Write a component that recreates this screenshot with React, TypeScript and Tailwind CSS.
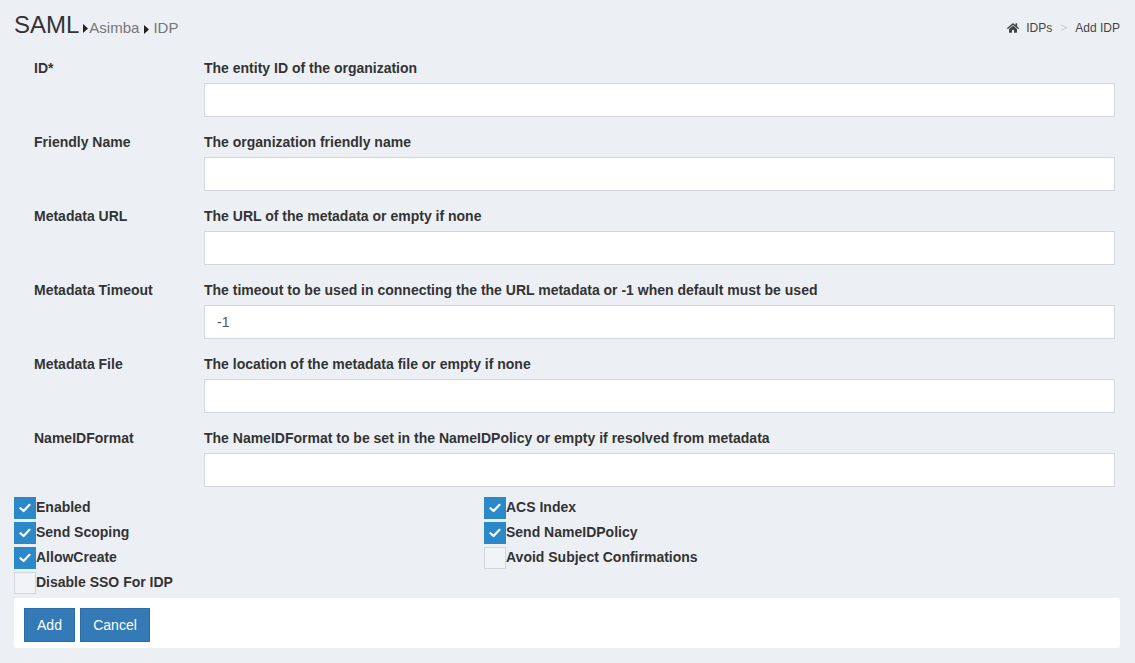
import { FaHome } from 'react-icons/fa';

interface Field {
  label: string;
  help: string;
  value?: string;
}

const fields: Field[] = [
  { label: 'ID*', help: 'The entity ID of the organization' },
  { label: 'Friendly Name', help: 'The organization friendly name' },
  { label: 'Metadata URL', help: 'The URL of the metadata or empty if none' },
  { label: 'Metadata Timeout', help: 'The timeout to be used in connecting the the URL metadata or -1 when default must be used', value: '-1' },
  { label: 'Metadata File', help: 'The location of the metadata file or empty if none' },
  { label: 'NameIDFormat', help: 'The NameIDFormat to be set in the NameIDPolicy or empty if resolved from metadata' },
];

const leftChecks = [
  { label: 'Enabled', checked: true },
  { label: 'Send Scoping', checked: true },
  { label: 'AllowCreate', checked: true },
  { label: 'Disable SSO For IDP', checked: false },
];

const rightChecks = [
  { label: 'ACS Index', checked: true },
  { label: 'Send NameIDPolicy', checked: true },
  { label: 'Avoid Subject Confirmations', checked: false },
];

function Caret() {
  return (
    <svg width="5" height="9" viewBox="0 0 5 9" className="inline-block">
      <path d="M0 0 L5 4.5 L0 9 Z" fill="#222" />
    </svg>
  );
}

function CheckRow({ label, checked }: { label: string; checked: boolean }) {
  return (
    <label className="flex h-[25px] items-start">
      {checked ? (
        <span className="flex h-[22px] w-[22px] items-center justify-center bg-[#2c89c9]">
          <svg width="12" height="10" viewBox="0 0 12 10">
            <path d="M1.5 5.2 L4.6 8 L10.5 1.8" stroke="#fff" strokeWidth="2.2" fill="none" strokeLinecap="round" strokeLinejoin="round" />
          </svg>
        </span>
      ) : (
        <span className="h-[22px] w-[22px] border border-[#d2d6de] bg-[#f1f3f6]" />
      )}
      <span className="text-[14px] font-bold leading-[20px] text-[#333]">{label}</span>
    </label>
  );
}

export default function App() {
  return (
    <div className="min-h-[663px] bg-[#ecf0f5] font-['Liberation_Sans',Arial,sans-serif] text-[#333]">
      {/* header */}
      <div className="flex items-start justify-between pl-[14px] pr-[15px] pt-[12px]">
        <h1 className="flex items-baseline text-[24px] leading-[26px] text-[#333]">
          SAML
          <span className="ml-[4px] flex items-baseline text-[15px] text-[#777]">
            <Caret />
            <span className="ml-[1px]">Asimba</span>
            <span className="ml-[5px]"><Caret /></span>
            <span className="ml-[4px]">IDP</span>
          </span>
        </h1>
        <div className="mt-[7px] flex items-center text-[12px] text-[#444]">
          <FaHome className="mr-[7px] text-[12px] text-[#444]" />
          <span>IDPs</span>
          <span className="px-[8px] text-[#ccc]">&gt;</span>
          <span>Add IDP</span>
        </div>
      </div>

      {/* fields */}
      <div className="pl-[34px] pr-[20px] pt-[17px]">
        {fields.map((f) => (
          <div key={f.label} className="flex pb-[15px]">
            <div className="w-[170px] text-[14px] font-bold leading-[20px]">{f.label}</div>
            <div className="flex-1">
              <div className="text-[14px] font-bold leading-[20px]">{f.help}</div>
              <input
                defaultValue={f.value}
                className="mt-[5px] h-[34px] w-full border border-[#d2d6de] bg-white px-[12px] text-[14px] text-[#555] outline-none"
              />
            </div>
          </div>
        ))}
      </div>

      {/* checkboxes */}
      <div className="-mt-[5px] flex pl-[14px]">
        <div className="w-[470px]">
          {leftChecks.map((c) => (
            <CheckRow key={c.label} {...c} />
          ))}
        </div>
        <div>
          {rightChecks.map((c) => (
            <CheckRow key={c.label} {...c} />
          ))}
        </div>
      </div>

      {/* footer */}
      <div className="ml-[14px] mr-[15px] mt-[1px] flex gap-[5px] rounded-[3px] bg-white px-[10px] pb-[6px] pt-[10px]">
        <button className="h-[34px] w-[51px] border border-[#2e6da4] bg-[#337ab7] text-[14px] text-white">Add</button>
        <button className="h-[34px] w-[70px] border border-[#2e6da4] bg-[#337ab7] text-[14px] text-white">Cancel</button>
      </div>
    </div>
  );
}
